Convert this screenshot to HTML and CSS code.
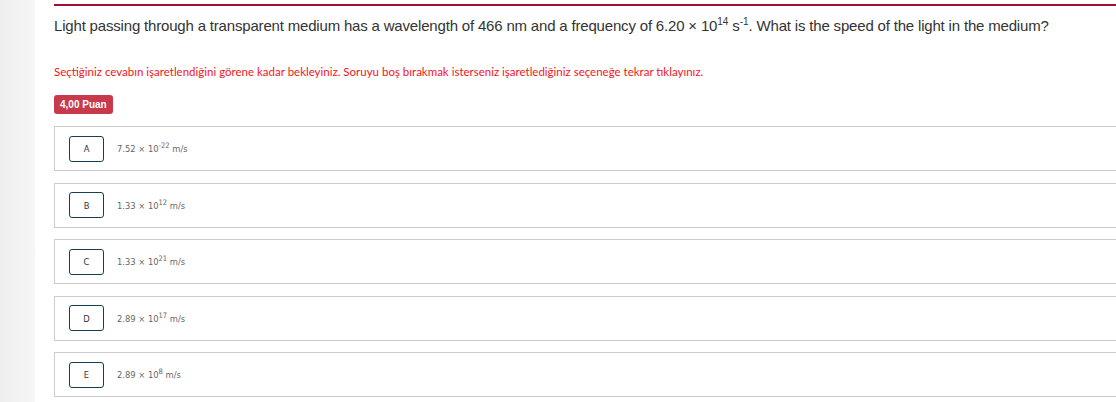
FILE: index.html
```html
<!DOCTYPE html>
<html lang="tr">
<head>
<meta charset="utf-8">
<title>Soru</title>
<link rel="stylesheet" href="styles.css">
</head>
<body>
<div class="page">
  <aside class="side"></aside>
  <main class="content">
    <div class="question">
      <p class="q-text">Light passing through a transparent medium has a wavelength of 466 nm and a frequency of 6.20 × 10<sup>14</sup> s<sup>-1</sup>. What is the speed of the light in the medium?</p>
      <p class="notice">Seçtiğiniz cevabın işaretlendiğini görene kadar bekleyiniz. Soruyu boş bırakmak isterseniz işaretlediğiniz seçeneğe tekrar tıklayınız.</p>
      <span class="badge">4,00 Puan</span>
      <ul class="options">
        <li class="option"><span class="letter">A</span><span class="answer">7.52 × 10<sup>-22</sup> m/s</span></li>
        <li class="option"><span class="letter">B</span><span class="answer">1.33 × 10<sup>12</sup> m/s</span></li>
        <li class="option"><span class="letter">C</span><span class="answer">1.33 × 10<sup>21</sup> m/s</span></li>
        <li class="option"><span class="letter">D</span><span class="answer">2.89 × 10<sup>17</sup> m/s</span></li>
        <li class="option"><span class="letter">E</span><span class="answer">2.89 × 10<sup>8</sup> m/s</span></li>
      </ul>
    </div>
  </main>
</div>
</body>
</html>
```

FILE: styles.css
```css
html, body {
  margin: 0;
  padding: 0;
  background: #ffffff;
  overflow: hidden;
}

.page {
  display: flex;
  width: 1116px;
  height: 402px;
  overflow: hidden;
}

.side {
  flex: 0 0 35px;
  background: linear-gradient(to right, #eeeeee, #f6f6f6);
}

.content {
  flex: 1 1 auto;
  padding-left: 19px;
  padding-top: 4px;
  min-width: 0;
}

.question {
  border-top: 2px solid #a50f2e;
  margin-right: -40px;
}

.q-text {
  margin: 0;
  padding-top: 11px;
  font-family: "Liberation Sans", Arial, sans-serif;
  font-size: 15px;
  line-height: 18px;
  color: #333333;
  letter-spacing: -0.18px;
}

.q-text sup {
  font-size: 10px;
  line-height: 0;
  vertical-align: 6px;
  letter-spacing: 0;
}

.notice {
  margin: 0;
  padding-top: 30px;
  font-family: "Lato", sans-serif;
  font-size: 11.5px;
  line-height: 14px;
  color: #f2141e;
}

.badge {
  display: inline-block;
  margin-top: 16px;
  padding: 0 6px;
  height: 19px;
  line-height: 19px;
  border-radius: 3px;
  background: #c73a4c;
  color: #ffffff;
  font-family: "Liberation Sans", Arial, sans-serif;
  font-size: 10px;
  font-weight: bold;
}

.options {
  list-style: none;
  margin: 12px 0 0;
  padding: 0;
  display: flex;
  flex-direction: column;
  gap: 11.5px;
}

.option {
  display: flex;
  align-items: center;
  gap: 13px;
  height: 43px;
  padding-left: 14px;
  border: 1px solid #cccccc;
  box-sizing: content-box;
}

.letter {
  display: flex;
  align-items: center;
  justify-content: center;
  width: 33px;
  height: 24px;
  border: 1.5px solid #173d56;
  border-radius: 3px;
  font-family: "DejaVu Sans Condensed", "DejaVu Sans", sans-serif;
  font-size: 9.3px;
  color: #333333;
}

.answer {
  font-family: "DejaVu Sans Condensed", "DejaVu Sans", sans-serif;
  font-size: 9.3px;
  color: #666666;
}

.answer sup {
  font-size: 7.5px;
  line-height: 0;
  vertical-align: 4px;
}
```
